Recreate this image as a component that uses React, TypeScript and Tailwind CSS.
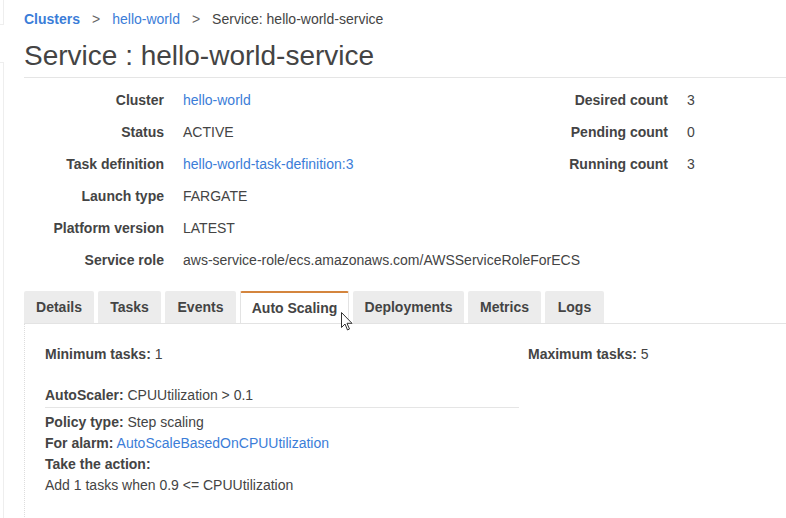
import React from "react";

const blue = "text-[#3b7dd8]";

function Row({ label, children }: { label: string; children: React.ReactNode }) {
  return (
    <>
      <div className="h-[32px] flex items-center justify-end font-bold text-[#444] whitespace-nowrap">{label}</div>
      <div className="h-[32px] flex items-center">{children}</div>
    </>
  );
}

export default function App() {
  const tabs = [
    { name: "Details", w: "w-[70px]" },
    { name: "Tasks", w: "w-[63px]" },
    { name: "Events", w: "w-[71px]" },
    { name: "Auto Scaling", w: "w-[109px]", active: true },
    { name: "Deployments", w: "w-[111px]" },
    { name: "Metrics", w: "w-[73px]" },
    { name: "Logs", w: "w-[59px]" },
  ];
  return (
    <div
      className="relative w-[786px] h-[518px] bg-white overflow-hidden text-[14px] text-[#444]"
      style={{ fontFamily: '"Liberation Sans", Arial, sans-serif' }}
    >
      {/* faint left-edge frames */}
      <div className="absolute left-0 top-0 w-[4px] h-[25px] border-r border-b border-[#eeeeee]" />
      <div className="absolute left-0 top-[62px] w-[4px] h-[456px] border-r border-t border-[#eeeeee]" />

      <div className="pl-[24px]">
        {/* breadcrumb */}
        <div className="h-[38px] flex items-center">
          <span className={`font-bold ${blue}`}>Clusters</span>
          <span className="text-[#666] mx-[12px]">&gt;</span>
          <span className={blue}>hello-world</span>
          <span className="text-[#666] mx-[12px]">&gt;</span>
          <span className="text-[#444]">Service: hello-world-service</span>
        </div>
        {/* title */}
        <div className="h-[40px] flex items-center border-b border-[#e5e5e5]">
          <h1 className="text-[28px] leading-none text-[#444] pb-[4px]">Service : hello-world-service</h1>
        </div>

        {/* details */}
        <div className="flex pt-[6px]">
          <div className="w-[476px] grid grid-cols-[140px_1fr] gap-x-[19px]">
            <Row label="Cluster"><span className={blue}>hello-world</span></Row>
            <Row label="Status">ACTIVE</Row>
            <Row label="Task definition"><span className={blue}>hello-world-task-definition:3</span></Row>
            <Row label="Launch type">FARGATE</Row>
            <Row label="Platform version">LATEST</Row>
            <Row label="Service role"><span className="whitespace-nowrap">aws-service-role/ecs.amazonaws.com/AWSServiceRoleForECS</span></Row>
          </div>
          <div className="grid grid-cols-[168px_1fr] gap-x-[19px] content-start">
            <Row label="Desired count">3</Row>
            <Row label="Pending count">0</Row>
            <Row label="Running count">3</Row>
          </div>
        </div>

        {/* tabs */}
        <div className="mt-[15px] flex gap-[4px] border-b border-[#e3e3e3]">
          {tabs.map((t) =>
            t.active ? (
              <div
                key={t.name}
                className={`${t.w} h-[32px] -mb-px bg-white border-t-2 border-t-[#d4853e] border-x border-x-[#e3e3e3] flex items-center justify-center font-bold text-[#444] rounded-t-[2px]`}
              >
                {t.name}
              </div>
            ) : (
              <div
                key={t.name}
                className={`${t.w} h-[32px] bg-[#ececec] flex items-center justify-center font-bold text-[#444] rounded-t-[2px]`}
              >
                {t.name}
              </div>
            )
          )}
        </div>

        {/* panel */}
        <div className="h-[195px] border-l border-b border-dotted border-[#dddddd] pl-[20px] pt-[20px]">
          <div className="flex leading-[21px]">
            <div className="w-[483px]">
              <span className="font-bold">Minimum tasks:</span> 1
            </div>
            <div>
              <span className="font-bold">Maximum tasks:</span> 5
            </div>
          </div>
          <div className="mt-[20px] w-[474px] border-b border-[#e5e5e5] leading-[21px] pb-[1px]">
            <span className="font-bold">AutoScaler:</span> CPUUtilization &gt; 0.1
          </div>
          <div className="leading-[21px] pt-[4px]">
            <div>
              <span className="font-bold">Policy type:</span> Step scaling
            </div>
            <div>
              <span className="font-bold">For alarm:</span> <span className={blue}>AutoScaleBasedOnCPUUtilization</span>
            </div>
            <div className="font-bold">Take the action:</div>
            <div>Add 1 tasks when 0.9 &lt;= CPUUtilization</div>
          </div>
        </div>
      </div>

      {/* mouse cursor */}
      <svg className="absolute left-[341px] top-[312px]" width="12" height="19" viewBox="0 0 12 19">
        <path d="M0.5 0.5 L0.5 15.5 L4 12 L6.5 18 L8.5 17 L6 11.3 L11 11.3 Z" fill="#fff" stroke="#333" strokeWidth="1" strokeLinejoin="round" />
      </svg>
    </div>
  );
}
